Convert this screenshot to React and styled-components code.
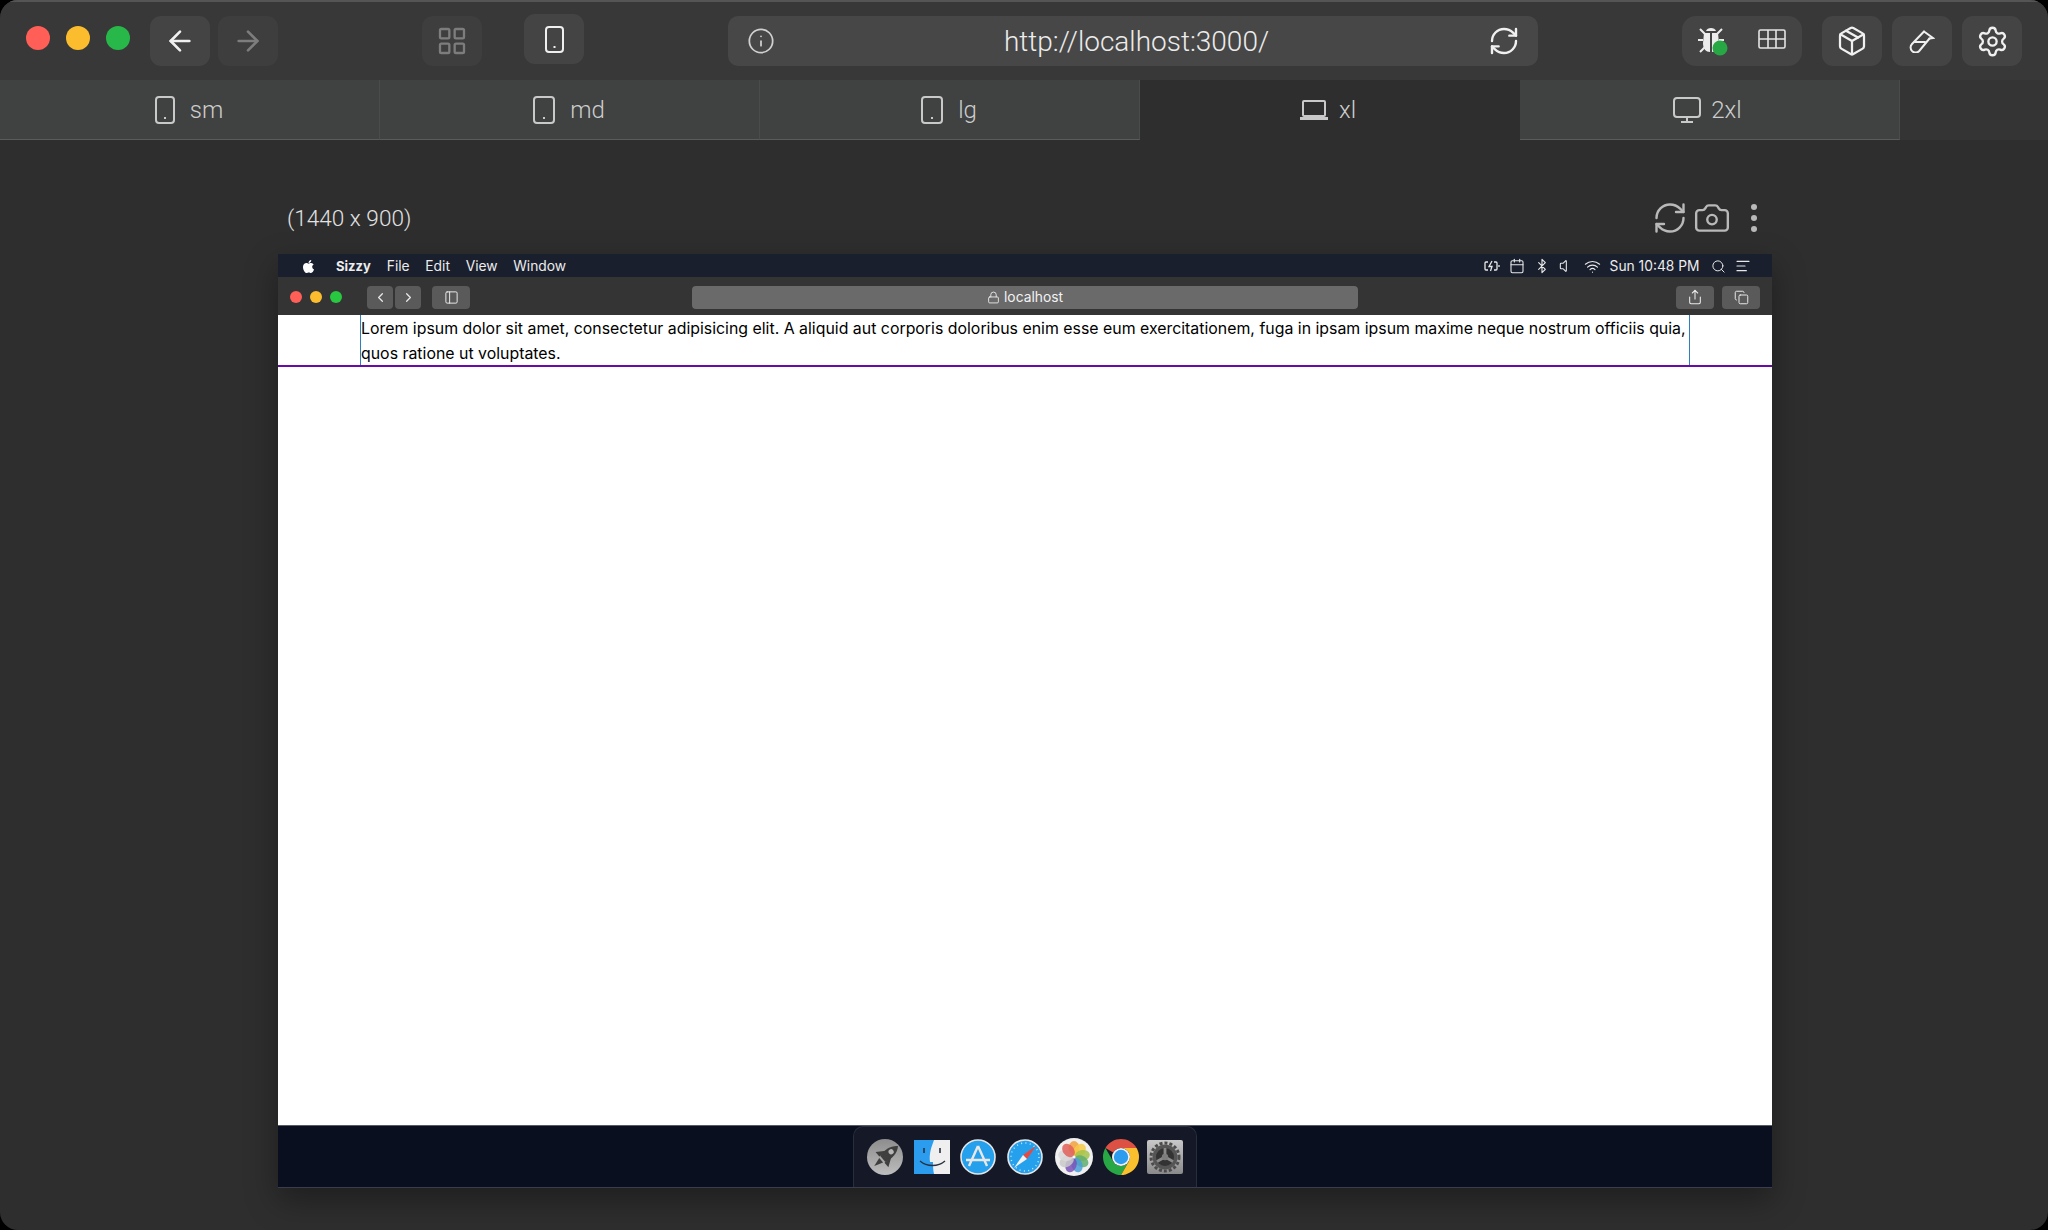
import styled, {createGlobalStyle} from "styled-components"
import {
	AlignLeft,
	ArrowLeft,
	ArrowRight,
	Bluetooth,
	Calendar,
	Camera,
	ChevronLeft,
	ChevronRight,
	Copy,
	Info,
	LayoutGrid,
	Lock,
	Package,
	PanelLeft,
	RefreshCw,
	Search,
	Settings,
	Share,
	Volume,
	Wifi,
} from "lucide-react"
import {FaApple} from "react-icons/fa"

const TABS = [
	{label: "sm", icon: "phone", width: 20},
	{label: "md", icon: "phone", width: 22},
	{label: "lg", icon: "phone", width: 22},
	{label: "xl", icon: "laptop", active: true},
	{label: "2xl", icon: "monitor"},
]

const MENU = ["File", "Edit", "View", "Window"]

const LOREM =
	"Lorem ipsum dolor sit amet, consectetur adipisicing elit. A aliquid aut corporis doloribus enim esse eum exercitationem, fuga in ipsam ipsum maxime neque nostrum officiis quia, quos ratione ut voluptates."

const PETALS = ["#f4a13c", "#f7c948", "#a4c34a", "#5fae6e", "#4a9fd8", "#7b52b8", "#c9c9c9", "#d9d9d9", "#e0605a"]

const App = () => {
	return (
		<Window>
			<GlobalStyle />
			<TopBar>
				<Lights>
					<Light $color="#ff5f57" />
					<Light $color="#fbbd2e" />
					<Light $color="#28b84a" />
				</Lights>
				<BarButton $ml={20}>
					<ArrowLeft size={32} strokeWidth={2} color="#f0f0f0" />
				</BarButton>
				<BarButton $ml={8} $dim>
					<ArrowRight size={32} strokeWidth={2} color="#7d7d7d" />
				</BarButton>
				<BarButton $ml={144} $dim>
					<LayoutGrid size={32} strokeWidth={1.75} color="#7d7d7d" />
				</BarButton>
				<BarButton $ml={42} $raised>
					<PhoneIcon width={19} height={27} color="#efefef" />
				</BarButton>
				<UrlBar>
					<Info size={28} strokeWidth={1.5} color="#d0d0d0" />
					<UrlText>http://localhost:3000/</UrlText>
					<RefreshCw size={32} strokeWidth={1.8} color="#f0f0f0" />
				</UrlBar>
				<ButtonGroup>
					<BugIcon />
					<TableIcon />
				</ButtonGroup>
				<BarButton $ml={20}>
					<Package size={32} strokeWidth={1.7} color="#f0f0f0" />
				</BarButton>
				<BarButton $ml={10}>
					<TubeIcon />
				</BarButton>
				<BarButton $ml={10}>
					<Settings size={33} strokeWidth={1.7} color="#f0f0f0" />
				</BarButton>
			</TopBar>

			<TabBar>
				{TABS.map((tab) => (
					<Tab
						key={tab.label}
						$active={tab.active}
						$gap={tab.icon === "phone" ? 15 : 10}
						$pr={tab.icon === "phone" ? 1 : 4}>
						{tab.icon === "phone" && (
							<PhoneIcon
								width={tab.width}
								height={28}
								color="#c9c9c9"
							/>
						)}
						{tab.icon === "laptop" && <LaptopIcon />}
						{tab.icon === "monitor" && <MonitorIcon />}
						<span>{tab.label}</span>
					</Tab>
				))}
			</TabBar>

			<Canvas>
				<DeviceHead>
					<DeviceSize>(1440 x 900)</DeviceSize>
					<DeviceTools>
						<RefreshCw size={36} strokeWidth={1.6} color="#b9b9b9" />
						<Camera size={38} strokeWidth={1.5} color="#b9b9b9" />
						<Dots>
							<i />
							<i />
							<i />
						</Dots>
					</DeviceTools>
				</DeviceHead>

				<Device>
					<MenuBar>
						<AppleMark>
							<FaApple size={15} color="#fff" />
						</AppleMark>
						<AppName>Sizzy</AppName>
						{MENU.map((item) => (
							<MenuItem key={item}>{item}</MenuItem>
						))}
						<StatusArea>
							<BatteryIcon />
							<Calendar size={16} strokeWidth={1.6} color="#e8e8e8" />
							<Bluetooth size={16} strokeWidth={1.7} color="#e8e8e8" />
							<Volume size={16} strokeWidth={1.6} color="#e8e8e8" />
							<Wifi size={17} strokeWidth={1.6} color="#e8e8e8" />
							<Clock>Sun 10:48 PM</Clock>
							<Search size={15} strokeWidth={1.6} color="#e8e8e8" />
							<AlignLeft size={16} strokeWidth={1.8} color="#e8e8e8" />
						</StatusArea>
					</MenuBar>

					<BrowserBar>
						<SmallLight $color="#ff5f57" />
						<SmallLight $color="#fbbd2e" />
						<SmallLight $color="#28c840" />
						<ChromeButton $w={26} $ml={17}>
							<ChevronLeft size={15} color="#e8e8e8" />
						</ChromeButton>
						<ChromeButton $w={26} $ml={2}>
							<ChevronRight size={15} color="#e8e8e8" />
						</ChromeButton>
						<ChromeButton $w={38} $ml={11}>
							<PanelLeft size={15} strokeWidth={1.6} color="#e8e8e8" />
						</ChromeButton>
						<AddressBar>
							<Lock size={13} strokeWidth={1.6} color="#f0f0f0" />
							<span>localhost</span>
						</AddressBar>
						<ChromeButton $w={38} $ml={0}>
							<Share size={16} strokeWidth={1.6} color="#e8e8e8" />
						</ChromeButton>
						<ChromeButton $w={38} $ml={8}>
							<Copy size={15} strokeWidth={1.6} color="#e8e8e8" />
						</ChromeButton>
					</BrowserBar>

					<Screen>
						<Header>
							<Container>{LOREM}</Container>
						</Header>
					</Screen>

					<DockStrip>
						<DockShelf>
							<DockSlot $ml={0}>
								<RocketIcon />
							</DockSlot>
							<DockSlot $ml={11}>
								<FinderIcon />
							</DockSlot>
							<DockSlot $ml={10}>
								<StoreIcon />
							</DockSlot>
							<DockSlot $ml={11}>
								<SafariIcon />
							</DockSlot>
							<DockSlot $ml={12}>
								<PhotosIcon />
							</DockSlot>
							<DockSlot $ml={10}>
								<ChromeIcon />
							</DockSlot>
							<DockSlot $ml={8}>
								<PrefsIcon />
							</DockSlot>
						</DockShelf>
					</DockStrip>
				</Device>
			</Canvas>
		</Window>
	)
}

export default App

const PhoneIcon = ({width, height, color}) => (
	<svg width={width} height={height} viewBox={`0 0 ${width} ${height}`} fill="none">
		<rect x="1" y="1" width={width - 2} height={height - 2} rx="3" stroke={color} strokeWidth="2" />
		<rect x={width / 2 - 1} y={height - 7} width="2" height="2" fill={color} />
	</svg>
)

const LaptopIcon = () => (
	<svg width="30" height="21" viewBox="0 0 30 21" fill="none" stroke="#c9c9c9" strokeWidth="2">
		<rect x="4" y="1" width="22" height="15" rx="1" />
		<path d="M1 18.5h28" strokeWidth="3" />
	</svg>
)

const MonitorIcon = () => (
	<svg width="28" height="26" viewBox="0 0 28 26" fill="none" stroke="#c9c9c9" strokeWidth="2">
		<rect x="1" y="1" width="26" height="19" rx="3" />
		<path d="M14 20v5M8 25h12" />
	</svg>
)

const BugIcon = () => (
	<svg width="34" height="32" viewBox="0 0 34 32">
		<path d="M9 6c1-4 9-4 10 0z" fill="#ececec" />
		<path d="M7 8h6v19c-4 0-7-3-7-9zM15 8h6l1 10c0 6-3 9-7 9z" fill="#ececec" />
		<path
			d="M3 4l5 5M25 4l-5 5M1 15h5M27 15h-5M3 27l5-5M25 27l-5-5"
			stroke="#ececec"
			strokeWidth="2"
		/>
		<circle cx="23" cy="23" r="7.5" fill="#28a745" />
	</svg>
)

const TableIcon = () => (
	<svg width="28" height="20" viewBox="0 0 28 20" fill="none" stroke="#e4e4e4" strokeWidth="1.6">
		<rect x="1" y="1" width="26" height="18" rx="1.5" />
		<path d="M1 10h26M10 1v18M18 1v18" />
	</svg>
)

const TubeIcon = () => (
	<svg width="26" height="24" viewBox="0 0 26 24" fill="none" stroke="#f0f0f0" strokeWidth="2" strokeLinecap="round">
		<path d="M15 2.5 3 15a5 5 0 0 0 7.2 7L20.5 9.5" />
		<path d="M15 2.5l9 6.5-3.5.5" />
		<path d="M5.5 13H16" />
	</svg>
)

const BatteryIcon = () => (
	<svg width="16" height="12" viewBox="0 0 16 12" fill="none" stroke="#e8e8e8" strokeWidth="1.3">
		<path d="M4 2H2a1 1 0 0 0-1 1v6a1 1 0 0 0 1 1h2M10 2h2a1 1 0 0 1 1 1v6a1 1 0 0 1-1 1h-2" />
		<path d="M8 1L5 6.5h3L6.5 11" />
		<path d="M15 5v2" />
	</svg>
)

const RocketIcon = () => (
	<svg width="36" height="36" viewBox="0 0 36 36">
		<defs>
			<linearGradient id="rocketBg" x1="0" y1="0" x2="0" y2="1">
				<stop offset="0" stopColor="#8d8d8d" />
				<stop offset="1" stopColor="#bdbdbd" />
			</linearGradient>
		</defs>
		<circle cx="18" cy="18" r="18" fill="url(#rocketBg)" />
		<g transform="rotate(50 18 18)" fill="#3f3f3f">
			<path d="M18 1c5 5 6 12 4 20h-8c-2-8-1-15 4-20z" />
			<path d="M14 13l-6 9h6zM22 13l6 9h-6z" />
			<path d="M15 23h6l-3 9z" />
			<circle cx="18" cy="10" r="2.6" fill="#b5b5b5" />
		</g>
	</svg>
)

const FinderIcon = () => (
	<svg width="36" height="36" viewBox="0 0 36 36">
		<rect y="1" width="36" height="34" fill="#efefef" />
		<path d="M0 1h20c-3 8-5 14-4 22h3c0 4 0 8 1 12H0z" fill="#2b9cee" />
		<path d="M10 9v5M26 9v5" stroke="#27313f" strokeWidth="1.6" />
		<path d="M6 22c7 6 18 6 25 0" stroke="#27313f" strokeWidth="1.4" fill="none" />
	</svg>
)

const StoreIcon = () => (
	<svg width="36" height="36" viewBox="0 0 36 36">
		<circle cx="18" cy="18" r="17" fill="#24a0ed" stroke="#e6e6e6" strokeWidth="1.6" />
		<path d="M18 7l-9 20M18 7l9 20M6 21h24" stroke="#e8e8e8" strokeWidth="2.4" fill="none" />
	</svg>
)

const SafariIcon = () => (
	<svg width="36" height="36" viewBox="0 0 36 36">
		<circle cx="18" cy="18" r="17" fill="#24a0ed" stroke="#e6e6e6" strokeWidth="1.6" />
		<circle cx="18" cy="18" r="14" fill="none" stroke="#cfe9fb" strokeWidth="1.4" strokeDasharray="1 3.4" />
		<path d="M29 7L20 20l-4-4z" fill="#e8483f" />
		<path d="M7 29l9-13 4 4z" fill="#f2f2f2" />
	</svg>
)

const PhotosIcon = () => (
	<svg width="38" height="38" viewBox="0 0 38 38">
		<circle cx="19" cy="19" r="19" fill="#f0f0f0" />
		{PETALS.map((color, i) => (
			<ellipse
				key={color}
				cx="19"
				cy="10.5"
				rx="5.5"
				ry="7.5"
				fill={color}
				opacity="0.85"
				transform={`rotate(${i * 40} 19 19)`}
			/>
		))}
		<circle cx="19" cy="19" r="1.5" fill="#f5f5f5" />
	</svg>
)

const ChromeIcon = () => (
	<svg width="36" height="36" viewBox="4 4 40 40">
		<path d="M6.68 14A20 20 0 0 1 41.32 14H24a10 10 0 0 0-8.66 5z" fill="#dd5144" />
		<path d="M6.68 14A20 20 0 0 0 24 44l8.66-15a10 10 0 0 1-17.32 0z" fill="#28a745" />
		<path d="M41.32 14A20 20 0 0 1 24 44l8.66-15A10 10 0 0 0 24 14z" fill="#fbc02d" />
		<circle cx="24" cy="24" r="10" fill="#f2f2f2" />
		<circle cx="24" cy="24" r="8" fill="#2b9cee" />
	</svg>
)

const PrefsIcon = () => (
	<svg width="36" height="36" viewBox="0 0 36 36">
		<defs>
			<linearGradient id="prefsBg" x1="0" y1="0" x2="0" y2="1">
				<stop offset="0" stopColor="#c8c8c8" />
				<stop offset="1" stopColor="#8a8a8a" />
			</linearGradient>
		</defs>
		<rect y="1" width="36" height="34" rx="2" fill="url(#prefsBg)" />
		<circle cx="18" cy="18" r="14" fill="none" stroke="#4c4c4c" strokeWidth="3" strokeDasharray="3 2" />
		<circle cx="18" cy="18" r="12.5" fill="#555" />
		<circle cx="18" cy="18" r="9" fill="#333" />
		<path d="M18 18V9M18 18l8 4.5M18 18l-8 4.5" stroke="#8a8a8a" strokeWidth="2.8" />
		<circle cx="18" cy="18" r="3.2" fill="#7d7d7d" />
	</svg>
)

const GlobalStyle = createGlobalStyle`
	html, body {
		margin: 0;
		background: #000;
		overflow: hidden;
	}

	* {
		box-sizing: border-box;
	}
`

const Window = styled.main`
	width: 2048px;
	height: 1230px;
	display: flex;
	flex-direction: column;
	border-radius: 18px;
	overflow: hidden;
	background: #2e2e2e;
	font-family: Roboto, "Liberation Sans", sans-serif;
`

const TopBar = styled.header`
	height: 80px;
	flex: none;
	display: flex;
	align-items: center;
	padding: 0 0 0 26px;
	background: #383838;
	border-top: 2px solid #555;
`

const Lights = styled.div`
	display: flex;
	gap: 16px;
	margin-top: -6px;
`

const Light = styled.span`
	width: 24px;
	height: 24px;
	border-radius: 50%;
	background: ${(p) => p.$color};
`

const BarButton = styled.button`
	width: 60px;
	height: 50px;
	flex: none;
	display: flex;
	align-items: center;
	justify-content: center;
	padding: 0;
	border: 0;
	border-radius: 11px;
	margin-left: ${(p) => p.$ml}px;
	margin-top: ${(p) => (p.$raised ? -4 : 0)}px;
	background: ${(p) => (p.$dim ? "#3e3e3e" : "#444")};
`

const UrlBar = styled.div`
	width: 810px;
	height: 50px;
	flex: none;
	margin-left: 144px;
	display: flex;
	align-items: center;
	padding: 0 18px 0 19px;
	border-radius: 10px;
	background: #474747;
`

const UrlText = styled.div`
	flex: 1;
	text-align: center;
	padding-left: 10px;
	font-size: 28px;
	font-weight: 300;
	color: #ececec;
`

const ButtonGroup = styled.div`
	width: 120px;
	height: 50px;
	flex: none;
	margin-left: 144px;
	display: flex;
	align-items: center;
	justify-content: space-between;
	padding: 0 16px 0 15px;
	border-radius: 14px;
	background: #444;

	svg:last-child {
		margin-top: -4px;
	}
`

const TabBar = styled.nav`
	height: 60px;
	flex: none;
	display: flex;
	background: #343434;
`

const Tab = styled.div`
	width: 380px;
	flex: none;
	display: flex;
	align-items: center;
	justify-content: center;
	gap: ${(p) => p.$gap}px;
	padding: 1px ${(p) => p.$pr}px 0 0;
	font-size: 24px;
	font-weight: 300;
	color: #cdcdcd;
	background: ${(p) => (p.$active ? "#2e2e2e" : "#3f4241")};
	border-right: 1px solid ${(p) => (p.$active ? "#2e2e2e" : "#4a4c4b")};
	border-bottom: 1px solid ${(p) => (p.$active ? "#2e2e2e" : "#5a5c5b")};
`

const Canvas = styled.section`
	flex: 1;
	min-height: 0;
	padding: 59px 0 0 278px;
`

const DeviceHead = styled.div`
	width: 1494px;
	height: 38px;
	margin-bottom: 17px;
	display: flex;
	align-items: center;
	justify-content: space-between;
	padding: 0 12px 0 9px;
`

const DeviceSize = styled.div`
	font-size: 22.6px;
	font-weight: 300;
	color: #e2e2e2;
`

const DeviceTools = styled.div`
	display: flex;
	align-items: center;
	gap: 5px;
`

const Dots = styled.div`
	width: 12px;
	margin-left: 12px;
	display: flex;
	flex-direction: column;
	align-items: center;
	gap: 5px;

	i {
		width: 6px;
		height: 6px;
		border-radius: 50%;
		background: #b9b9b9;
	}
`

const Device = styled.div`
	width: 1494px;
	display: flex;
	flex-direction: column;
	box-shadow: 0 12px 30px rgba(0, 0, 0, 0.35);
	font-family: Inter, "Liberation Sans", sans-serif;
`

const MenuBar = styled.div`
	height: 23px;
	display: flex;
	align-items: center;
	padding: 1px 0 0 23px;
	background: #1a1f2e;
	color: #ececec;
	font-size: 13.8px;
`

const AppleMark = styled.span`
	display: flex;
	width: 35px;
`

const AppName = styled.span`
	font-weight: 700;
	font-size: 13px;
	margin-right: 16px;
`

const MenuItem = styled.span`
	margin-right: 15.7px;
`

const StatusArea = styled.div`
	margin-left: auto;
	display: flex;
	align-items: center;
	gap: 9px;
	padding-right: 21px;
`

const Clock = styled.span`
	margin-right: 2.5px;
`

const BrowserBar = styled.div`
	height: 38px;
	display: flex;
	align-items: center;
	padding: 2px 11px 0 12px;
	background: #343434;
`

const SmallLight = styled.span`
	width: 12px;
	height: 12px;
	flex: none;
	border-radius: 50%;
	background: ${(p) => p.$color};
	margin-right: 8px;
`

const ChromeButton = styled.button`
	width: ${(p) => p.$w}px;
	height: 23px;
	flex: none;
	margin-left: ${(p) => p.$ml}px;
	display: flex;
	align-items: center;
	justify-content: center;
	padding: 0;
	border: 0;
	border-radius: 4px;
	background: #5a5a5a;
`

const AddressBar = styled.div`
	width: 666px;
	height: 23px;
	flex: none;
	margin: 0 318px 0 222px;
	display: flex;
	align-items: center;
	justify-content: center;
	gap: 4px;
	border-radius: 4px;
	background: #6a6a6a;
	color: #f2f2f2;
	font-size: 13.8px;
`

const Screen = styled.div`
	height: 810px;
	background: #fff;
`

const Header = styled.div`
	border-bottom: 2px solid #6a0ba8;
	padding-left: 82px;
`

const Container = styled.div`
	width: 1330px;
	height: 50px;
	padding-top: 1px;
	border-left: 1px solid #2f7fc0;
	border-right: 1px solid #2f7fc0;
	font-size: 15.89px;
	line-height: 25px;
	color: #000;
`

const DockStrip = styled.div`
	height: 63px;
	display: flex;
	justify-content: center;
	background: #0a0f20;
	border-top: 1px solid #565a66;
	border-bottom: 1px solid #3a3e4c;
`

const DockShelf = styled.div`
	width: 344px;
	display: flex;
	align-items: center;
	padding: 0 0 0 13px;
	border-radius: 10px 10px 0 0;
	background: #141827;
	border: 1px solid #2a2d3a;
	border-bottom: 0;
`

const DockSlot = styled.div`
	display: flex;
	flex: none;
	margin-left: ${(p) => p.$ml}px;
`
